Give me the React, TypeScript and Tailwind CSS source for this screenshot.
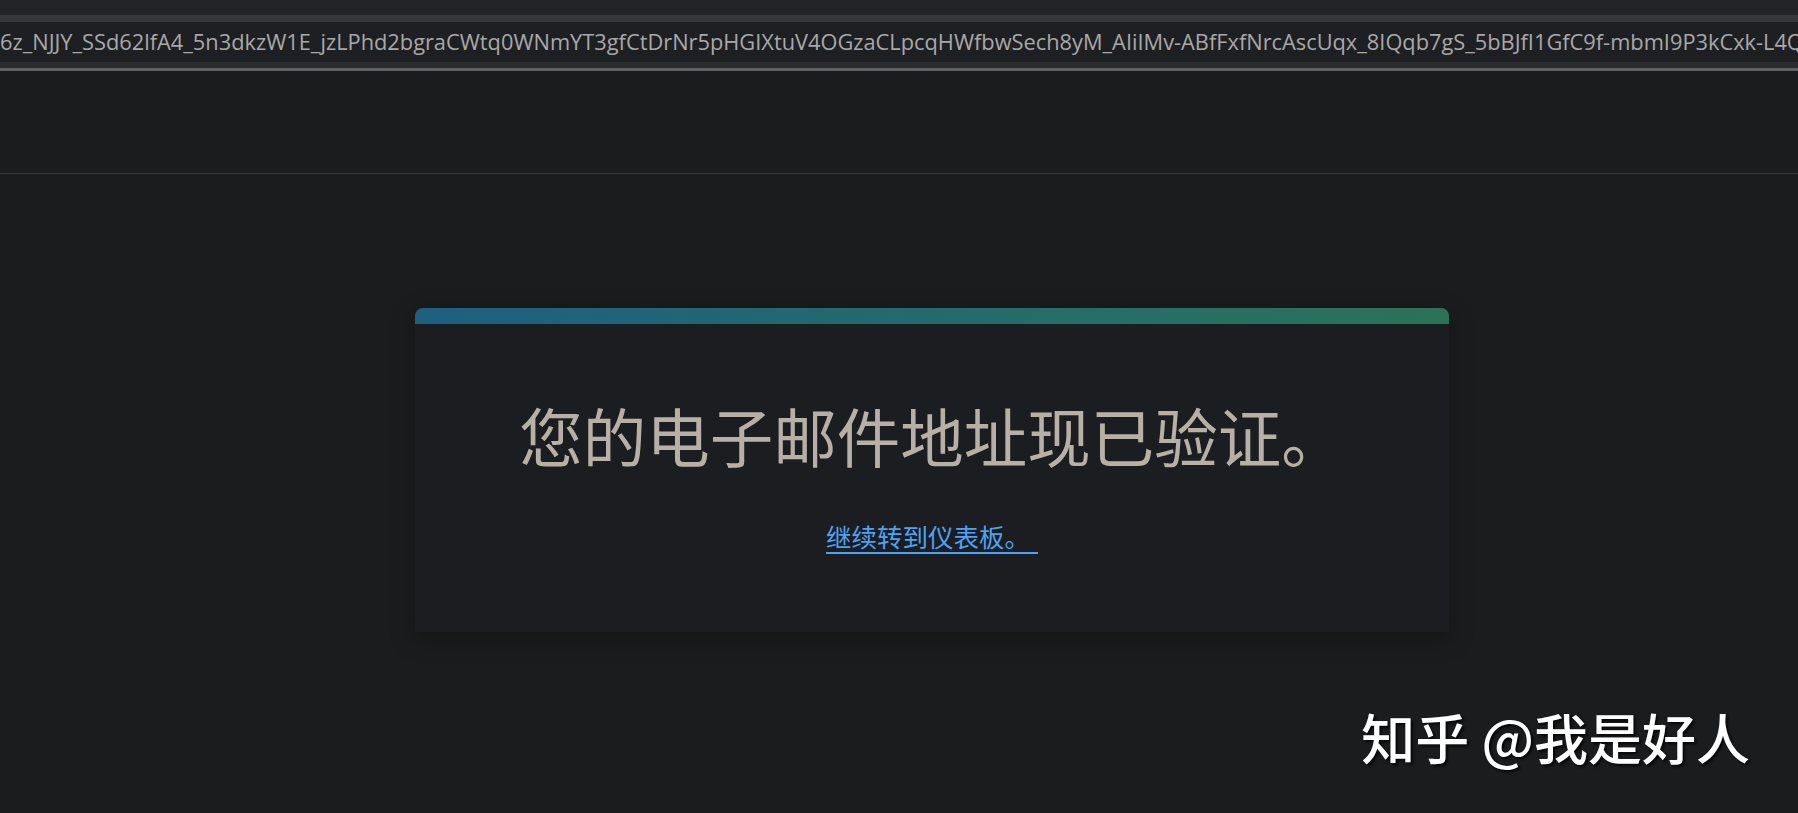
const URL_TEXT =
  "6z_NJJY_SSd62lfA4_5n3dkzW1E_jzLPhd2bgraCWtq0WNmYT3gfCtDrNr5pHGIXtuV4OGzaCLpcqHWfbwSech8yM_AIiIMv-ABfFxfNrcAscUqx_8IQqb7gS_5bBJfI1GfC9f-mbmI9P3kCxk-L4Qk";

const cjk = '"Noto Sans CJK SC", "Noto Sans", sans-serif';

export default function App() {
  return (
    <div className="relative flex h-[813px] w-[1798px] flex-col overflow-hidden bg-[#1b1c1e]">
      {/* browser address strip */}
      <div className="h-[15px] bg-[#232428]" />
      <div className="h-[7px] bg-[#36373a]" />
      <div className="flex h-[40px] items-center overflow-hidden bg-[#1e1f22]">
        <span
          className="whitespace-nowrap text-[21.8px] text-[#a8a8a8]"
          style={{ fontFamily: '"Open Sans", "Noto Sans", sans-serif' }}
        >
          {URL_TEXT}
        </span>
      </div>
      <div className="h-[6px] bg-[#2a2b2e]" />
      <div className="h-[3px] bg-[#5f6062]" />

      {/* page header */}
      <div className="h-[103px] border-b border-[#38393b]" />

      {/* content */}
      <div className="flex justify-center pl-[66px] pt-[134px]">
        <div className="w-[1034px] rounded-t-[8px] bg-[#1c1d20] shadow-[0_6px_26px_rgba(0,0,0,0.3)]">
          <div className="h-[16px] rounded-t-[8px] bg-gradient-to-r from-[#1f5f80] via-[#246a6c] to-[#2c7258]" />
          <div className="flex flex-col items-center pb-[78px] pt-[67px]">
            <h1
              className="text-[63.5px] leading-[86px] text-[#b6b0a6]"
              style={{ fontFamily: cjk }}
            >
              您的电子邮件地址现已验证。
            </h1>
            <a
              href="#"
              className="mt-[42px] border-b-[2px] border-[#4ea2f2] pr-[8px] text-[25.5px] leading-[33px] text-[#4ea2f2]"
              style={{ fontFamily: cjk }}
            >
              继续转到仪表板。
            </a>
          </div>
        </div>
      </div>

      {/* watermark overlay */}
      <div
        className="absolute bottom-[46px] right-[48px] text-[54px] font-medium leading-[60px] text-white [text-shadow:2px_2px_3px_rgba(0,0,0,0.8)]"
        style={{ fontFamily: cjk }}
      >
        知乎 @我是好人
      </div>
    </div>
  );
}
